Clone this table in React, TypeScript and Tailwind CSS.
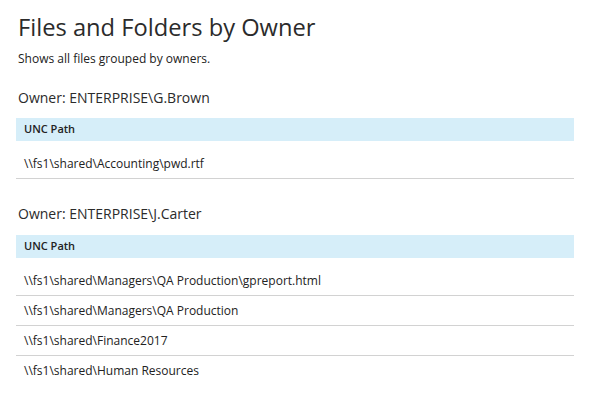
const groups = [
  {
    owner: "ENTERPRISE\\G.Brown",
    paths: ["\\\\fs1\\shared\\Accounting\\pwd.rtf"],
  },
  {
    owner: "ENTERPRISE\\J.Carter",
    paths: [
      "\\\\fs1\\shared\\Managers\\QA Production\\gpreport.html",
      "\\\\fs1\\shared\\Managers\\QA Production",
      "\\\\fs1\\shared\\Finance2017",
      "\\\\fs1\\shared\\Human Resources",
    ],
  },
];

export default function App() {
  return (
    <div className="min-h-screen bg-white px-[16px] pt-[10px] text-[#333] font-['Open_Sans',sans-serif]">
      <h1 className="pl-[2px] text-[23.7px] leading-[34px] text-[#2b2b2b]">Files and Folders by Owner</h1>
      <p className="mt-[7px] pl-[2px] text-[12px] leading-[16px] text-[#222]">Shows all files grouped by owners.</p>

      {groups.map((g, i) => (
        <section key={g.owner} className={i === 0 ? "mt-[21px]" : "mt-[25px]"}>
          <h2 className="pl-[2px] text-[14px] leading-[20px] text-[#2b2b2b]">Owner: {g.owner}</h2>
          <div className={i === 0 ? "mt-[10px] w-[558px]" : "mt-[11px] w-[558px]"}>
            <div className="flex h-[23px] items-center bg-[#d6eef9] px-[8px] text-[11px] font-semibold text-[#222]">
              UNC Path
            </div>
            <div className="pt-[8px]">
              {g.paths.map((p, j) => (
                <div
                  key={p}
                  className={
                    j === g.paths.length - 1 && g.paths.length > 1
                      ? "flex h-[30px] items-center px-[8px] text-[12px] text-[#222]"
                      : "flex h-[30px] items-center border-b border-[#d2d2d2] px-[8px] text-[12px] text-[#222]"
                  }
                >
                  {p}
                </div>
              ))}
            </div>
          </div>
        </section>
      ))}
    </div>
  );
}
